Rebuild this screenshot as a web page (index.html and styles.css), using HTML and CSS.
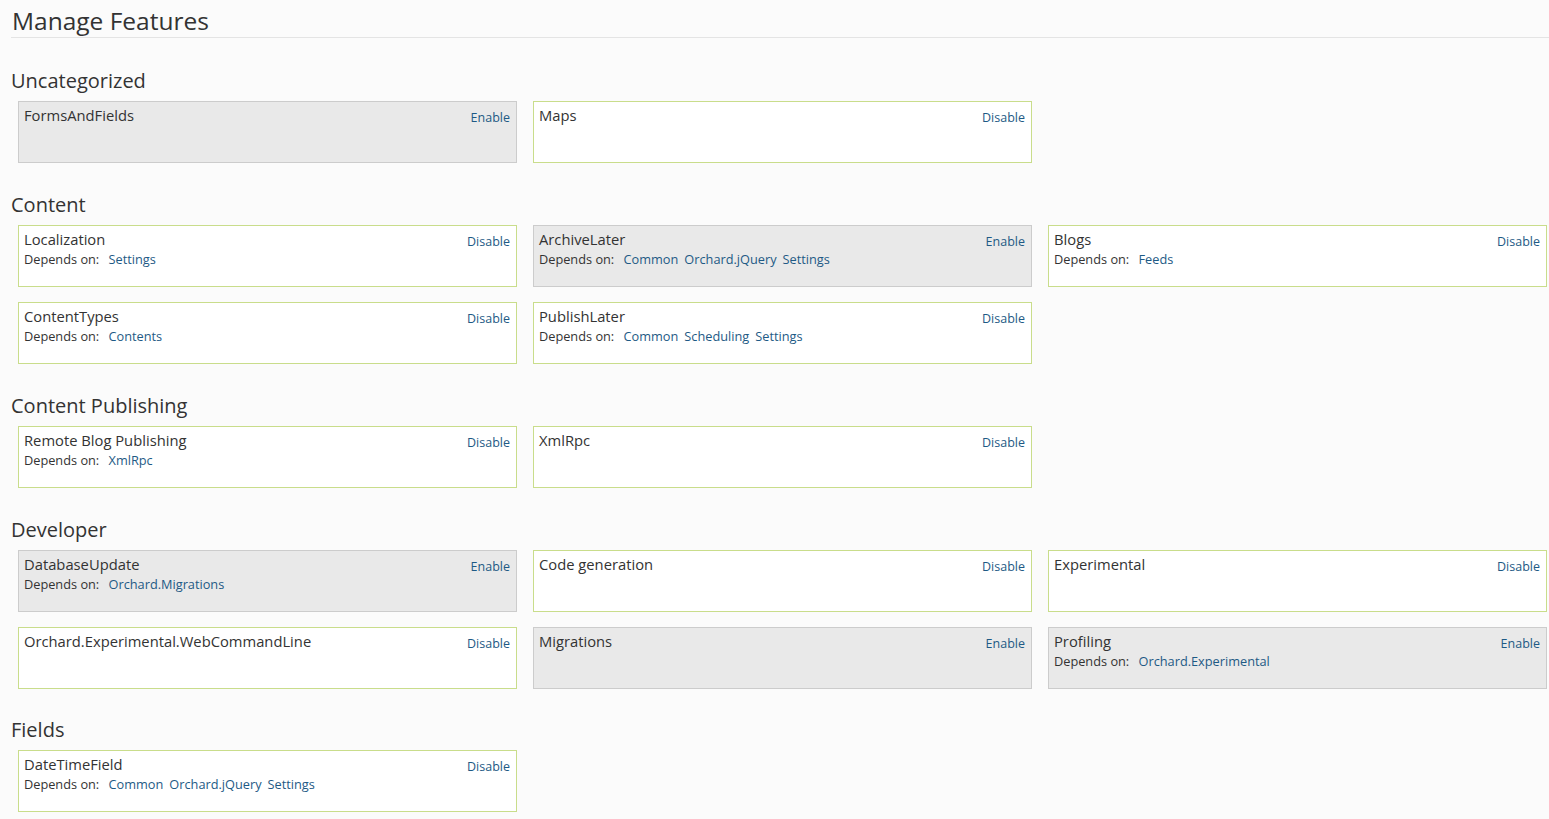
FILE: index.html
```html
<!DOCTYPE html>
<html>
<head>
<meta charset="utf-8">
<title>Manage Features</title>
<link rel="stylesheet" href="styles.css">
</head>
<body>
<div class="page">
  <h1 class="title">Manage Features</h1>

  <section class="category">
    <h2 class="cat-title">Uncategorized</h2>
    <div class="grid">
      <div class="feature off"><div class="head"><span class="name">FormsAndFields</span><a class="action">Enable</a></div></div>
      <div class="feature on"><div class="head"><span class="name">Maps</span><a class="action">Disable</a></div></div>
    </div>
  </section>

  <section class="category">
    <h2 class="cat-title">Content</h2>
    <div class="grid">
      <div class="feature on"><div class="head"><span class="name">Localization</span><a class="action">Disable</a></div>
        <div class="deps">Depends on: <a>Settings</a></div></div>
      <div class="feature off"><div class="head"><span class="name">ArchiveLater</span><a class="action">Enable</a></div>
        <div class="deps">Depends on: <a>Common</a><a>Orchard.jQuery</a><a>Settings</a></div></div>
      <div class="feature on"><div class="head"><span class="name">Blogs</span><a class="action">Disable</a></div>
        <div class="deps">Depends on: <a>Feeds</a></div></div>
      <div class="feature on"><div class="head"><span class="name">ContentTypes</span><a class="action">Disable</a></div>
        <div class="deps">Depends on: <a>Contents</a></div></div>
      <div class="feature on"><div class="head"><span class="name">PublishLater</span><a class="action">Disable</a></div>
        <div class="deps">Depends on: <a>Common</a><a>Scheduling</a><a>Settings</a></div></div>
    </div>
  </section>

  <section class="category">
    <h2 class="cat-title">Content Publishing</h2>
    <div class="grid">
      <div class="feature on"><div class="head"><span class="name">Remote Blog Publishing</span><a class="action">Disable</a></div>
        <div class="deps">Depends on: <a>XmlRpc</a></div></div>
      <div class="feature on"><div class="head"><span class="name">XmlRpc</span><a class="action">Disable</a></div></div>
    </div>
  </section>

  <section class="category">
    <h2 class="cat-title">Developer</h2>
    <div class="grid">
      <div class="feature off"><div class="head"><span class="name">DatabaseUpdate</span><a class="action">Enable</a></div>
        <div class="deps">Depends on: <a>Orchard.Migrations</a></div></div>
      <div class="feature on"><div class="head"><span class="name">Code generation</span><a class="action">Disable</a></div></div>
      <div class="feature on"><div class="head"><span class="name">Experimental</span><a class="action">Disable</a></div></div>
      <div class="feature on"><div class="head"><span class="name">Orchard.Experimental.WebCommandLine</span><a class="action">Disable</a></div></div>
      <div class="feature off"><div class="head"><span class="name">Migrations</span><a class="action">Enable</a></div></div>
      <div class="feature off"><div class="head"><span class="name">Profiling</span><a class="action">Enable</a></div>
        <div class="deps">Depends on: <a>Orchard.Experimental</a></div></div>
    </div>
  </section>

  <section class="category">
    <h2 class="cat-title">Fields</h2>
    <div class="grid">
      <div class="feature on"><div class="head"><span class="name">DateTimeField</span><a class="action">Disable</a></div>
        <div class="deps">Depends on: <a>Common</a><a>Orchard.jQuery</a><a>Settings</a></div></div>
    </div>
  </section>
</div>
</body>
</html>
```

FILE: styles.css
```css
html, body {
  margin: 0;
  padding: 0;
  background: #fbfbfb;
}
body {
  font-family: "Open Sans", "Noto Sans", "Liberation Sans", sans-serif;
  color: #333333;
}
.page {
  padding-left: 11px;
}
.title {
  margin: 0;
  padding: 6px 0 1px 1px;
  font-size: 24.5px;
  line-height: 30px;
  font-weight: 400;
  color: #333333;
  border-bottom: 1px solid #e4e4e4;
}
.category {
  margin-top: 29px;
}
.category:first-of-type {
  margin-top: 30px;
}
.category:last-of-type {
  margin-top: 28px;
}
.cat-title {
  margin: 0 0 7px 0;
  font-size: 20px;
  line-height: 26px;
  font-weight: 400;
  color: #333333;
}
.grid {
  display: grid;
  grid-template-columns: repeat(3, 499px);
  column-gap: 16px;
  row-gap: 15px;
  padding-left: 7px;
}
.feature {
  box-sizing: border-box;
  height: 62px;
  padding: 3px 6px 0 5px;
  border: 1px solid #c9dd8b;
  background: #ffffff;
}
.feature.off {
  background: #e9e9e9;
  border-color: #cccccc;
}
.head {
  display: flex;
  justify-content: space-between;
  align-items: baseline;
}
.name {
  font-size: 14.75px;
  line-height: 20px;
  color: #333333;
}
.action {
  font-size: 12.5px;
  color: #1e5a85;
  position: relative;
  top: 1px;
}
.deps {
  font-size: 12.75px;
  line-height: 20px;
  color: #333333;
}
.deps a {
  color: #1e5a85;
  margin-left: 6px;
}
.deps a:first-child {
  margin-left: 6px;
}
```
